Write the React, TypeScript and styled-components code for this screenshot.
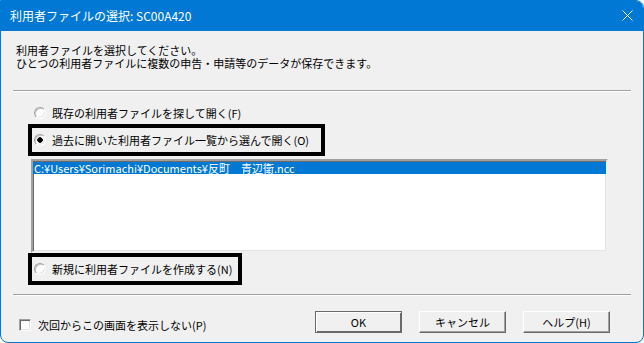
import * as React from 'react';
import styled, { createGlobalStyle } from 'styled-components';

const GlobalStyle = createGlobalStyle`
  html, body {
    margin: 0;
    padding: 0;
    background: #ffffff;
  }
  body {
    font-family: "Noto Sans CJK JP", "Noto Sans", sans-serif;
    font-size: 11px;
    color: #000;
  }
`;

const accent = '#0078d4';

export default function App() {
    return <>
        <GlobalStyle />
        <Window>
            <TitleBar>
                <Title>利用者ファイルの選択: SC00A420</Title>
                <CloseButton>
                    <svg width="11" height="11" viewBox="0 0 11 11">
                        <path d="M0.5 0.5 L10.5 10.5 M10.5 0.5 L0.5 10.5" stroke="#fff" strokeWidth="1" fill="none" />
                    </svg>
                </CloseButton>
            </TitleBar>
            <Body>
                <Message>
                    利用者ファイルを選択してください。<br />
                    ひとつの利用者ファイルに複数の申告・申請等のデータが保存できます。
                </Message>
                <Separator $top={20} />
                <Options>
                    <RadioRow $top={13}>
                        <Radio />
                        <Label>既存の利用者ファイルを探して開く(F)</Label>
                    </RadioRow>
                    <RadioRow $framed $top={3} $width={297}>
                        <Radio $checked />
                        <Label>過去に開いた利用者ファイル一覧から選んで開く(O)</Label>
                    </RadioRow>
                    <ListBox>
                        <ListItem $selected>C:¥Users¥Sorimachi¥Documents¥反町　青辺衛.ncc</ListItem>
                    </ListBox>
                    <RadioRow $framed $width={214}>
                        <Radio />
                        <Label>新規に利用者ファイルを作成する(N)</Label>
                    </RadioRow>
                </Options>
                <Separator $top={9} />
                <Footer>
                    <CheckGroup>
                        <CheckBox />
                        <Label>次回からこの画面を表示しない(P)</Label>
                    </CheckGroup>
                    <Buttons>
                        <Button $focused>OK</Button>
                        <Button>キャンセル</Button>
                        <Button>ヘルプ(H)</Button>
                    </Buttons>
                </Footer>
            </Body>
        </Window>
    </>;
}

//Style Components
const Window = styled.div`
  box-sizing: border-box;
  width: 644px;
  height: 343px;
  display: flex;
  flex-direction: column;
  border: 1px solid ${accent};
  border-radius: 0 8px 8px 8px;
  overflow: hidden;
  background: #f0f0f0;
`;

const TitleBar = styled.div`
  height: 30px;
  flex: none;
  display: flex;
  align-items: center;
  justify-content: space-between;
  padding: 0 10px 0 9px;
  background: ${accent};
`;

const Title = styled.span`
  color: #fff;
  font-size: 12px;
  line-height: 14px;
  margin-top: -1px;
`;

const CloseButton = styled.div`
  width: 11px;
  height: 11px;
  display: flex;
  margin-top: -1px;
`;

const Body = styled.div`
  flex: 1;
  display: flex;
  flex-direction: column;
`;

const Message = styled.p`
  margin: 13px 0 0 0;
  padding-left: 15px;
  line-height: 13px;
  white-space: nowrap;
`;

const Separator = styled.div<{ $top: number }>`
  margin: ${p => p.$top}px 12px 0 12px;
  border-top: 1px solid #a0a0a0;
  border-bottom: 1px solid #ffffff;
`;

const Options = styled.div`
  display: flex;
  flex-direction: column;
  align-items: flex-start;
  padding-left: 27px;
`;

const RadioRow = styled.div<{ $framed?: boolean; $top?: number; $width?: number }>`
  box-sizing: border-box;
  display: flex;
  align-items: center;
  gap: 6px;
  margin-top: ${p => p.$top || 0}px;
  height: ${p => p.$framed ? 32 : 16}px;
  width: ${p => p.$width ? p.$width + 'px' : 'auto'};
  padding-left: ${p => p.$framed ? 2 : 6}px;
  border: ${p => p.$framed ? '4px solid #000' : 'none'};
`;

const Radio = styled.span<{ $checked?: boolean }>`
  box-sizing: border-box;
  width: 12px;
  height: 12px;
  flex: none;
  border-radius: 50%;
  border: 1px solid;
  border-color: #a0a0a0 #ffffff #ffffff #a0a0a0;
  box-shadow: inset 1px 1px 0 #c8c8c8, inset -1px -1px 0 #e3e3e3;
  background: ${p => p.$checked
        ? 'radial-gradient(circle, #000 0 2.5px, #fff 3px)'
        : '#fff'};
`;

const Label = styled.span`
  line-height: 12px;
  white-space: nowrap;
`;

const ListBox = styled.div`
  box-sizing: border-box;
  margin: 3px 0 0 3px;
  width: 577px;
  height: 94px;
  padding-top: 1px;
  background: #fff;
  border: 2px solid;
  border-color: #a0a0a0 #f0f0f0 #f0f0f0 #a0a0a0;
  box-shadow: inset 1px 1px 0 #696969, inset -1px -1px 0 #e3e3e3;
`;

const ListItem = styled.div<{ $selected?: boolean }>`
  height: 12px;
  line-height: 12px;
  padding-left: 1px;
  white-space: nowrap;
  background: ${p => p.$selected ? accent : 'transparent'};
  color: ${p => p.$selected ? '#fff' : '#000'};
`;

const Footer = styled.div`
  display: flex;
  align-items: flex-start;
  justify-content: space-between;
  padding: 15px 33px 0 18px;
`;

const CheckGroup = styled.div`
  display: flex;
  align-items: center;
  gap: 7px;
  margin-top: 8px;
`;

const CheckBox = styled.span`
  box-sizing: border-box;
  width: 12px;
  height: 12px;
  border: 1px solid;
  border-color: #a0a0a0 #ffffff #ffffff #a0a0a0;
  box-shadow: inset 1px 1px 0 #696969, inset -1px -1px 0 #e3e3e3;
  background: #fff;
`;

const Buttons = styled.div`
  display: flex;
  gap: 17px;
`;

const Button = styled.button<{ $focused?: boolean }>`
  box-sizing: border-box;
  width: 87px;
  height: 22px;
  padding: 0;
  font-family: "Noto Sans CJK JP", "Noto Sans", sans-serif;
  font-size: 11px;
  line-height: 12px;
  color: #000;
  background: #f0f0f0;
  border: 1px solid;
  border-color: ${p => p.$focused ? '#696969' : '#ffffff #696969 #696969 #ffffff'};
  box-shadow: ${p => p.$focused
        ? 'inset 1px 1px 0 #fff, inset -1px -1px 0 #696969'
        : 'inset -1px -1px 0 #a0a0a0'};
`;
